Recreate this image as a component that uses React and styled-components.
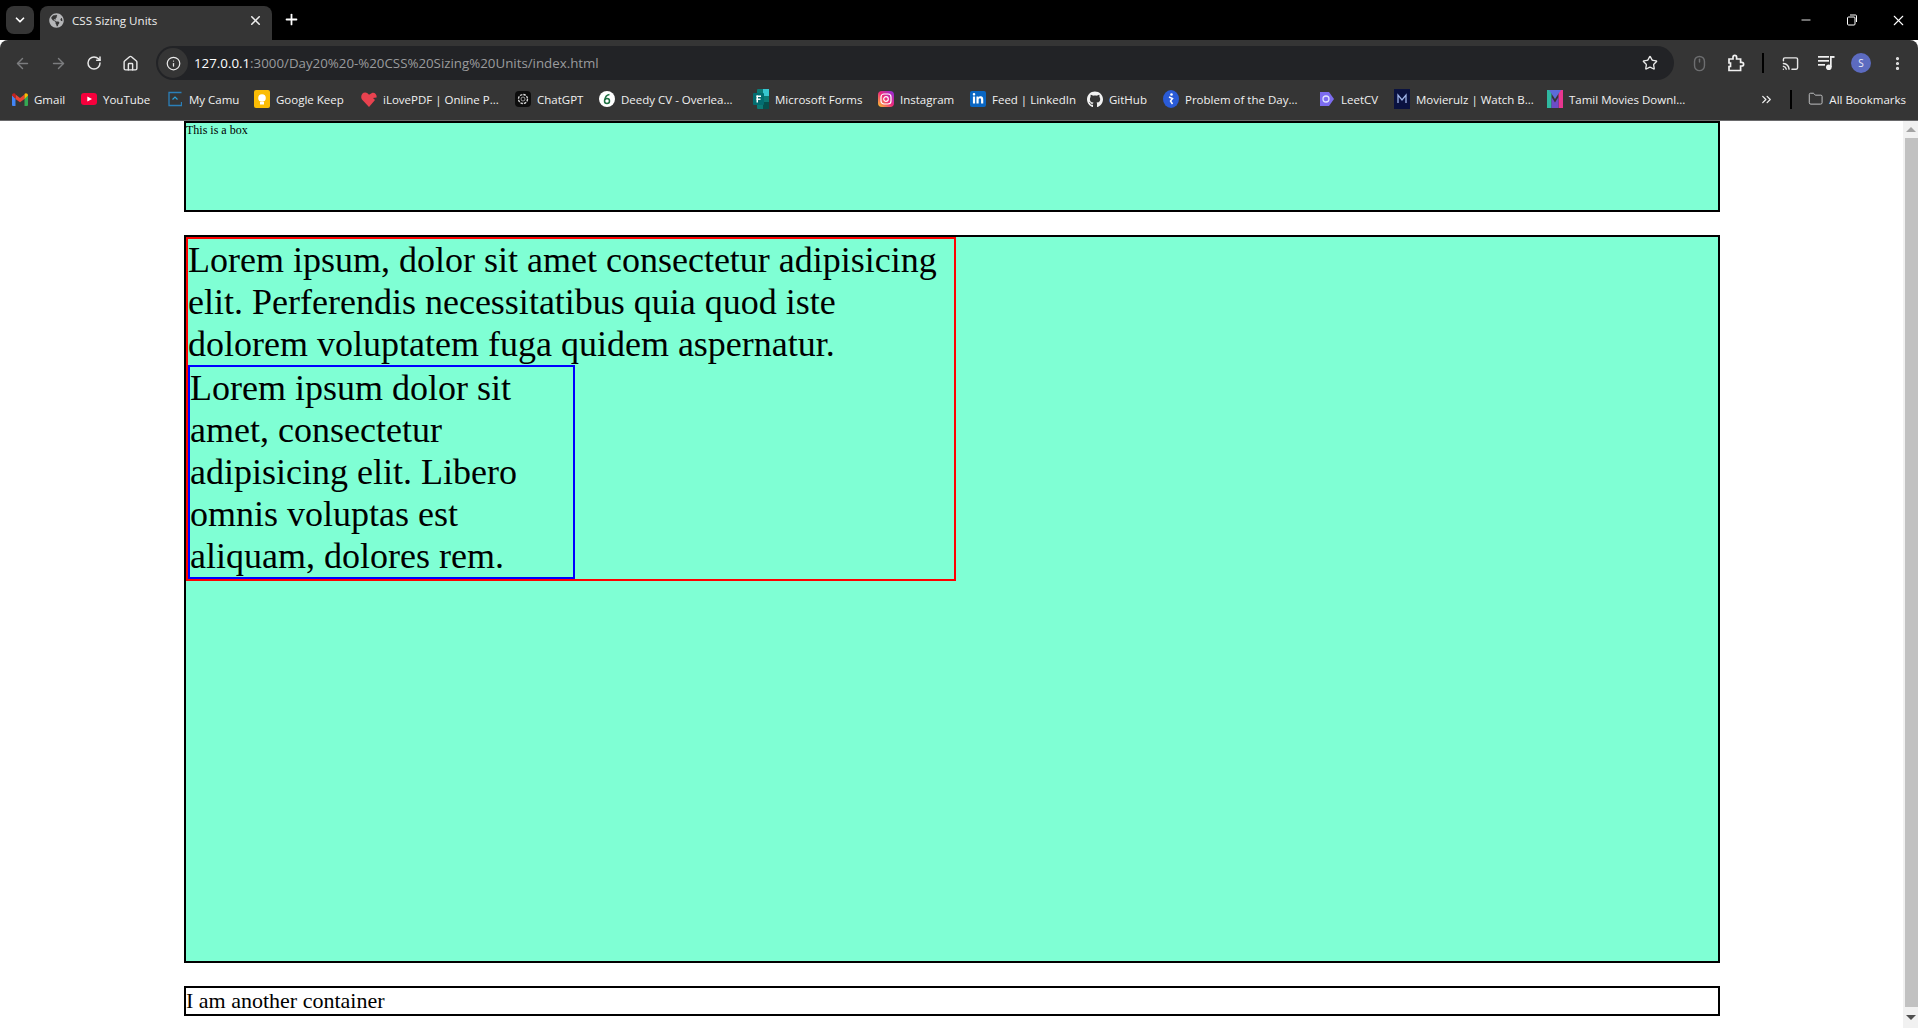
import React from 'react'
import styled, { createGlobalStyle } from 'styled-components'
import {
  ArrowLeft,
  ArrowRight,
  ChevronDown,
  ChevronsRight,
  Cast,
  EllipsisVertical,
  Folder,
  Home,
  Info,
  Minus,
  Mouse,
  Plus,
  RotateCw,
  Star,
  X,
} from 'lucide-react'
import { FaGithub, FaGlobeAmericas, FaLinkedinIn } from 'react-icons/fa'

const GlobalStyle = createGlobalStyle`
  html, body {
    margin: 0;
    padding: 0;
    height: 1028px;
    overflow: hidden;
    background: #fff;
  }
`

const Screen = styled.div`
  display: flex;
  flex-direction: column;
  height: 1028px;
  font-family: 'Open Sans', 'Noto Sans', sans-serif;
`

const TabStrip = styled.div`
  display: flex;
  align-items: flex-end;
  height: 40px;
  background: #000;
  color: #fff;
  flex-shrink: 0;
`

const TabSearch = styled.div`
  width: 28px;
  height: 28px;
  margin: 0 6px 6px 6px;
  border-radius: 8px;
  background: #353535;
  display: flex;
  align-items: center;
  justify-content: center;
`

const Tab = styled.div`
  width: 232px;
  height: 34px;
  box-sizing: border-box;
  padding: 0 9px 6px;
  background: #353535;
  border-radius: 8px 8px 0 0;
  display: flex;
  align-items: center;
  gap: 8px;
  font-size: 11.6px;
  color: #eee;
`

const TabTitle = styled.span`
  flex: 1;
`

const NewTab = styled.div`
  margin: 0 0 7px 5px;
  width: 28px;
  height: 28px;
  display: flex;
  align-items: center;
  justify-content: center;
`

const WindowControls = styled.div`
  margin-left: auto;
  height: 40px;
  display: flex;
  align-items: center;
  gap: 6px;
`

const WindowButton = styled.div`
  width: 40px;
  display: flex;
  justify-content: center;
`

const Toolbar = styled.div`
  height: 44px;
  box-sizing: border-box;
  padding-top: 6px;
  background: #353535;
  border-radius: 8px 8px 0 0;
  display: flex;
  align-items: flex-start;
  flex-shrink: 0;
  color: #e8e8e8;
`

const NavButton = styled.div`
  width: 36px;
  height: 34px;
  display: flex;
  align-items: center;
  justify-content: center;
  color: ${({ $dim }) => ($dim ? '#7c7d7f' : '#e8e8e8')};
`

const NavGroup = styled.div`
  display: flex;
  padding-left: 4px;
`

const Omnibox = styled.div`
  width: 1518px;
  height: 34px;
  margin-left: 8px;
  box-sizing: border-box;
  padding: 0 16px 0 2px;
  border-radius: 17px;
  background: #222326;
  display: flex;
  align-items: center;
  flex-shrink: 0;
`

const SiteInfo = styled.div`
  width: 30px;
  height: 30px;
  border-radius: 50%;
  background: #353535;
  display: flex;
  align-items: center;
  justify-content: center;
  margin-right: 6px;
`

const Url = styled.span`
  flex: 1;
  color: #fff;
  font-size: 13.3px;
`

const UrlRest = styled.span`
  color: #9a9b9d;
`

const ToolIcons = styled.div`
  display: flex;
  align-items: center;
  height: 34px;
`

const ToolIcon = styled.div`
  width: ${({ $w }) => $w || 36}px;
  display: flex;
  justify-content: center;
  color: ${({ $dim }) => ($dim ? '#6d6e70' : '#e8e8e8')};
`

const Divider = styled.div`
  width: 2px;
  height: ${({ $h }) => $h || 20}px;
  background: #000;
  flex-shrink: 0;
`

const Avatar = styled.div`
  width: 20px;
  height: 20px;
  border-radius: 50%;
  background: #5c6bc0;
  color: #e8eaf6;
  font-size: 10px;
  display: flex;
  align-items: center;
  justify-content: center;
`

const BookmarksBar = styled.div`
  height: 37px;
  box-sizing: border-box;
  padding: 0 0 6px 12px;
  border-bottom: 1px solid #6a6a6c;
  background: #353535;
  display: flex;
  align-items: center;
  flex-shrink: 0;
  color: #f1f1f1;
  font-size: 11.5px;
`

const Bookmark = styled.div`
  width: ${({ $w }) => $w}px;
  flex-shrink: 0;
  display: flex;
  align-items: center;
  gap: ${({ $gap }) => $gap || 6}px;
  white-space: nowrap;
`

const IconSlot = styled.div`
  width: 16px;
  height: 16px;
  flex-shrink: 0;
  display: flex;
  align-items: center;
  justify-content: center;
`

const LinkedinTile = styled.div`
  width: 16px;
  height: 16px;
  flex-shrink: 0;
  border-radius: 2px;
  background: #0a66c2;
  color: #fff;
  display: flex;
  align-items: center;
  justify-content: center;
`

const BarEnd = styled.div`
  margin-left: auto;
  display: flex;
  align-items: center;
  gap: 16px;
  padding-right: 12px;
`

const Page = styled.div`
  flex: 1;
  display: flex;
  min-height: 0;
  font-family: 'Liberation Serif', 'Times New Roman', serif;
  color: #000;
`

const Content = styled.div`
  flex: 1;
  padding-left: 184px;
  display: flex;
  flex-direction: column;
  gap: 23px;
`

const SmallBox = styled.div`
  width: 1532px;
  height: 87px;
  border: 2px solid #000;
  background: aquamarine;
  font-size: 12px;
`

const BigBox = styled.div`
  width: 1532px;
  height: 724px;
  border: 2px solid #000;
  background: aquamarine;
  font-size: 36px;
  line-height: 42px;
`

const Outer = styled.div`
  width: 766px;
  border: 2px solid #f00;
`

const Inner = styled.div`
  width: 383px;
  border: 2px solid #00f;
`

const FooterBox = styled.div`
  width: 1532px;
  height: 26px;
  border: 2px solid #000;
  font-size: 22px;
  line-height: 26px;
`

const Scrollbar = styled.div`
  width: 15px;
  background: #f1f1f1;
  display: flex;
  flex-direction: column;
`

const ScrollArrow = styled.div`
  height: ${({ $h }) => $h}px;
  flex-shrink: 0;
  display: flex;
  align-items: center;
  justify-content: center;
`

const Triangle = styled.span`
  display: block;
  border-left: 5px solid transparent;
  border-right: 5px solid transparent;
  ${({ $up }) => ($up ? 'border-bottom: 5px solid #a3a3a3' : 'border-top: 5px solid #505050')};
`

const ScrollThumb = styled.div`
  flex: 1;
  margin-left: 2px;
  background: #c1c1c1;
`

const GmailIcon = () => (
  <svg width="16" height="13" viewBox="0 0 16 13">
    <path d="M0 2v10a1 1 0 0 0 1 1h2.500V5.500z" fill="#4285f4" />
    <path d="M16 2v10a1 1 0 0 1-1 1h-2.500V5.500z" fill="#34a853" />
    <path d="M3.500 6V1.500L8 5l4.500-3.500V6L8 9.300z" fill="#ea4335" />
    <path d="M0 2.500C0 .6 2.200-.5 3.500 1v5z" fill="#c5221f" />
    <path d="M16 2.500C16 .6 13.800-.5 12.500 1v5z" fill="#fbbc04" />
  </svg>
)

const YoutubeIcon = () => (
  <svg width="16" height="12" viewBox="0 0 16 12">
    <rect width="16" height="12" rx="3" fill="#f6003c" />
    <path d="M6.300 3.400L11 6 6.300 8.600z" fill="#fff" />
  </svg>
)

const CamuIcon = () => (
  <svg width="14" height="16" viewBox="0 0 14 16" fill="none">
    <path d="M13.500 1.500H1v13h12.500V11" stroke="#2b7fb8" strokeWidth="1.300" />
    <path d="M4.500 8.500L7 6l2.500 2.500" stroke="#2b9fd8" strokeWidth="1.200" />
  </svg>
)

const KeepIcon = () => (
  <svg width="16" height="18" viewBox="0 0 16 18">
    <rect width="16" height="18" rx="2" fill="#fbbc04" />
    <circle cx="8" cy="8" r="3.800" fill="#fff" />
    <rect x="6" y="12" width="4" height="2.500" fill="#fff" />
  </svg>
)

const HeartIcon = () => (
  <svg width="16" height="15" viewBox="0 0 16 15">
    <path d="M8 15L1 7.500C-1 4.500 1 .5 4.200.5 6 .5 7.200 1.500 8 2.800L11 1c3-.8 5 2 4.600 4.500L12 6l2 2z" fill="#e8424f" />
  </svg>
)

const ChatGptIcon = () => (
  <svg width="16" height="16" viewBox="0 0 16 16" fill="none">
    <rect width="16" height="16" rx="4" fill="#0d0d0d" />
    <circle cx="8" cy="8" r="4.500" stroke="#ddd" strokeWidth="1.300" strokeDasharray="2.500 1" />
    <circle cx="8" cy="8" r="2" stroke="#bbb" strokeWidth="0.800" />
  </svg>
)

const DeedyIcon = () => (
  <svg width="16" height="16" viewBox="0 0 16 16" fill="none">
    <circle cx="8" cy="8" r="8" fill="#fff" />
    <circle cx="8" cy="10" r="2.500" stroke="#1d6f42" strokeWidth="1.500" />
    <path d="M6 9c0-3 2-5 4.500-5.500" stroke="#1d6f42" strokeWidth="1.500" />
  </svg>
)

const FormsIcon = () => (
  <svg width="16" height="20" viewBox="0 0 16 20">
    <rect x="4" y="0" width="12" height="20" rx="1" fill="#0b7a75" />
    <rect x="10" y="0" width="6" height="7" fill="#37c6d0" />
    <rect x="10" y="13" width="6" height="7" fill="#05504d" />
    <rect x="0" y="4" width="11" height="12" rx="1" fill="#036c70" />
    <rect x="3.500" y="6.500" width="1.500" height="7" fill="#fff" />
    <rect x="3.500" y="6.500" width="4.500" height="1.500" fill="#fff" />
    <rect x="3.500" y="9.500" width="4" height="1.400" fill="#fff" />
  </svg>
)

const InstagramIcon = () => (
  <svg width="16" height="16" viewBox="0 0 16 16">
    <defs>
      <linearGradient id="insta" x1="0" y1="1" x2="1" y2="0">
        <stop offset="0" stopColor="#fdc92f" />
        <stop offset="0.500" stopColor="#ee2a7b" />
        <stop offset="1" stopColor="#8a2be2" />
      </linearGradient>
    </defs>
    <rect width="16" height="16" rx="4" fill="url(#insta)" />
    <rect x="3" y="3" width="10" height="10" rx="3" fill="none" stroke="#fff" strokeWidth="1.200" />
    <circle cx="8" cy="8" r="2.300" fill="none" stroke="#fff" strokeWidth="1.200" />
  </svg>
)

const ProblemIcon = () => (
  <svg width="16" height="18" viewBox="0 0 16 18">
    <ellipse cx="8" cy="9" rx="8" ry="9" fill="#2a5bd7" />
    <circle cx="8.500" cy="4.500" r="1.300" fill="#fff" />
    <path d="M6 7l3.500 1.500-2 2.500 2 3" fill="none" stroke="#fff" strokeWidth="1.500" />
  </svg>
)

const LeetIcon = () => (
  <svg width="14" height="16" viewBox="0 0 14 16">
    <path d="M0 1l9 0 5 7-5 7-9 0z" fill="#7c6cf0" />
    <circle cx="6" cy="8" r="3" fill="none" stroke="#dfe3ff" strokeWidth="1.300" />
  </svg>
)

const MovieIcon = () => (
  <svg width="16" height="20" viewBox="0 0 16 20">
    <rect width="16" height="20" fill="#0a1240" />
    <path d="M4 14V6l4 5 4-5v8" fill="none" stroke="#9fb4e8" strokeWidth="1.300" />
  </svg>
)

const TamilIcon = () => (
  <svg width="16" height="18" viewBox="0 0 16 18">
    <rect x="0" y="0" width="4.500" height="18" fill="#2fb8a0" />
    <rect x="11.500" y="0" width="4.500" height="18" fill="#e8368f" />
    <path d="M2 0l6 9 6-9z" fill="#5c6bd8" />
    <path d="M4.500 7L8 12.500 11.500 7v11h-7z" fill="#6d4cc8" />
  </svg>
)

const PuzzleIcon = () => (
  <svg width="18" height="18" viewBox="0 0 18 18" fill="none" stroke="#f1f1f1" strokeWidth="1.700">
    <path d="M2 5h4V3.200a1.800 1.800 0 0 1 3.600 0V5h4v3.400h1.200a1.800 1.800 0 0 1 0 3.600h-1.200v4.500H2v-4h1.500V9H2z" />
  </svg>
)

const MediaIcon = () => (
  <svg width="18" height="16" viewBox="0 0 18 16" fill="#f1f1f1">
    <rect x="0" y="1" width="11" height="1.700" />
    <rect x="0" y="5" width="11" height="1.700" />
    <rect x="0" y="9" width="7" height="1.700" />
    <rect x="12" y="1" width="4.500" height="1.900" />
    <rect x="12" y="1" width="1.700" height="11" />
    <circle cx="10.800" cy="12.200" r="2.800" />
  </svg>
)

const bookmarks = [
  { name: 'Gmail', w: 69, icon: <GmailIcon /> },
  { name: 'YouTube', w: 86, icon: <YoutubeIcon /> },
  { name: 'My Camu', w: 87, icon: <CamuIcon /> },
  { name: 'Google Keep', w: 107, icon: <KeepIcon /> },
  { name: 'iLovePDF | Online P...', w: 154, icon: <HeartIcon /> },
  { name: 'ChatGPT', w: 84, icon: <ChatGptIcon /> },
  { name: 'Deedy CV - Overlea...', w: 154, icon: <DeedyIcon /> },
  { name: 'Microsoft Forms', w: 125, icon: <FormsIcon /> },
  { name: 'Instagram', w: 92, icon: <InstagramIcon /> },
  {
    name: 'Feed | LinkedIn',
    w: 117,
    icon: (
      <LinkedinTile>
        <FaLinkedinIn size={12} />
      </LinkedinTile>
    ),
  },
  { name: 'GitHub', w: 76, icon: <FaGithub size={17} color="#f2f2f2" /> },
  { name: 'Problem of the Day...', w: 156, icon: <ProblemIcon /> },
  { name: 'LeetCV', w: 75, icon: <LeetIcon /> },
  { name: 'Movierulz | Watch B...', w: 153, icon: <MovieIcon /> },
  { name: 'Tamil Movies Downl...', w: 160, icon: <TamilIcon /> },
]

const App = () => (
  <Screen>
    <GlobalStyle />
    <TabStrip>
      <TabSearch>
        <ChevronDown size={14} strokeWidth={3} />
      </TabSearch>
      <Tab>
        <FaGlobeAmericas size={15} color="#b5b6b8" />
        <TabTitle>CSS Sizing Units</TabTitle>
        <X size={15} strokeWidth={2.5} />
      </Tab>
      <NewTab>
        <Plus size={17} strokeWidth={2.5} />
      </NewTab>
      <WindowControls>
        <WindowButton>
          <Minus size={14} strokeWidth={1.5} />
        </WindowButton>
        <WindowButton>
          <svg width="12" height="12" viewBox="0 0 12 12" fill="none" stroke="#fff">
            <rect x="1.500" y="3" width="7.500" height="8" rx="1" />
            <path d="M4 1h5.500a1 1 0 0 1 1 1v6" />
          </svg>
        </WindowButton>
        <WindowButton>
          <X size={17} strokeWidth={1.5} />
        </WindowButton>
      </WindowControls>
    </TabStrip>

    <Toolbar>
      <NavGroup>
        <NavButton $dim>
          <ArrowLeft size={17} />
        </NavButton>
        <NavButton $dim>
          <ArrowRight size={17} />
        </NavButton>
        <NavButton>
          <RotateCw size={16} strokeWidth={2.25} />
        </NavButton>
        <NavButton>
          <Home size={17} />
        </NavButton>
      </NavGroup>
      <Omnibox>
        <SiteInfo>
          <Info size={15} />
        </SiteInfo>
        <Url>
          127.0.0.1
          <UrlRest>:3000/Day20%20-%20CSS%20Sizing%20Units/index.html</UrlRest>
        </Url>
        <Star size={16} />
      </Omnibox>
      <ToolIcons>
        <ToolIcon $w={51} $dim>
          <Mouse size={17} />
        </ToolIcon>
        <ToolIcon $w={22}>
          <PuzzleIcon />
        </ToolIcon>
        <ToolIcon $w={15} />
        <Divider />
        <ToolIcon $w={52}>
          <Cast size={17} />
        </ToolIcon>
        <ToolIcon $w={21}>
          <MediaIcon />
        </ToolIcon>
        <ToolIcon $w={48}>
          <Avatar>S</Avatar>
        </ToolIcon>
        <ToolIcon $w={24}>
          <EllipsisVertical size={17} strokeWidth={2.5} />
        </ToolIcon>
      </ToolIcons>
    </Toolbar>

    <BookmarksBar>
      {bookmarks.map(({ name, w, icon }) => (
        <Bookmark key={name} $w={w}>
          <IconSlot>{icon}</IconSlot>
          {name}
        </Bookmark>
      ))}
      <BarEnd>
        <ChevronsRight size={15} />
        <Divider $h={19} />
        <Bookmark $w={98} $gap={6}>
          <Folder size={20} color="#c4c5c7" strokeWidth={1.5} />
          All Bookmarks
        </Bookmark>
      </BarEnd>
    </BookmarksBar>

    <Page>
      <Content>
        <SmallBox>This is a box</SmallBox>
        <BigBox>
          <Outer>
            Lorem ipsum, dolor sit amet consectetur adipisicing elit. Perferendis
            necessitatibus quia quod iste dolorem voluptatem fuga quidem aspernatur.
            <Inner>
              Lorem ipsum dolor sit amet, consectetur adipisicing elit. Libero omnis
              voluptas est aliquam, dolores rem.
            </Inner>
          </Outer>
        </BigBox>
        <FooterBox>I am another container</FooterBox>
      </Content>
      <Scrollbar>
        <ScrollArrow $h={17}>
          <Triangle $up />
        </ScrollArrow>
        <ScrollThumb />
        <ScrollArrow $h={21}>
          <Triangle />
        </ScrollArrow>
      </Scrollbar>
    </Page>
  </Screen>
)

export default App
